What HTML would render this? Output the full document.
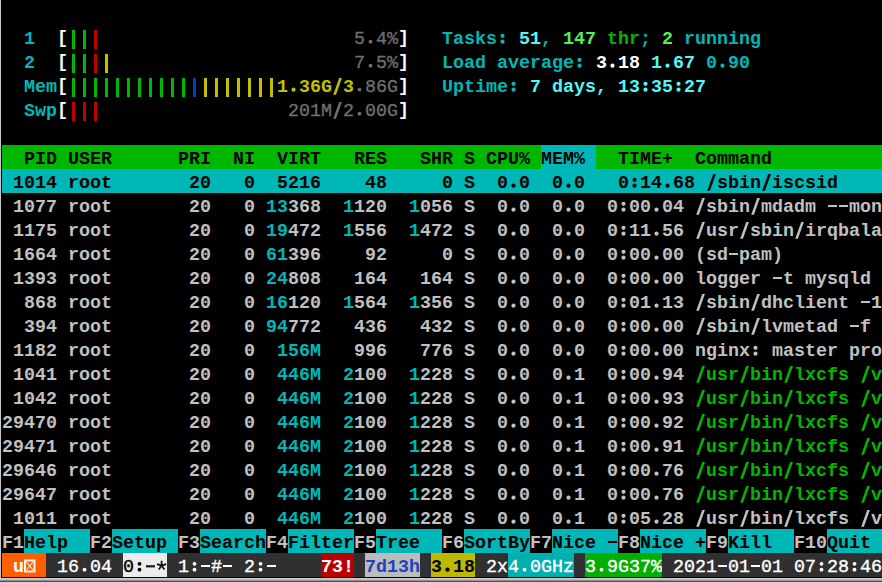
<!DOCTYPE html><html><head><meta charset="utf-8"><style>
html,body{margin:0;padding:0;background:#000;}
body{width:882px;height:582px;position:relative;overflow:hidden;font-family:"Liberation Mono",monospace;}
#L{position:absolute;left:0;top:0;width:1px;height:582px;background:#c8c8c8;}
#B1{position:absolute;left:0;top:578px;width:882px;height:4px;background:linear-gradient(#d0d0d0 0,#c4c4c4 25%,#c0c0c0 25%,#c0c0c0 50%,#909090 50%,#909090 75%,#505050 75%);}

.b{position:absolute;width:3px;height:19px;}
.h{position:absolute;width:9px;height:2px;}
.s{position:absolute;height:24px;line-height:30px;white-space:pre;font-size:18.33px;font-weight:700;}
</style></head><body>
<div id="L"></div><div id="B1"></div>
<div class="b" style="left:72px;top:30px;background:#00b700"></div>
<div class="b" style="left:83px;top:30px;background:#00b700"></div>
<div class="b" style="left:94px;top:30px;background:#c00000"></div>
<div class="b" style="left:72px;top:54px;background:#00b700"></div>
<div class="b" style="left:83px;top:54px;background:#00b700"></div>
<div class="b" style="left:94px;top:54px;background:#c00000"></div>
<div class="b" style="left:105px;top:54px;background:#c0c000"></div>
<div class="b" style="left:72px;top:78px;background:#00b700"></div>
<div class="b" style="left:83px;top:78px;background:#00b700"></div>
<div class="b" style="left:94px;top:78px;background:#00b700"></div>
<div class="b" style="left:105px;top:78px;background:#00b700"></div>
<div class="b" style="left:116px;top:78px;background:#00b700"></div>
<div class="b" style="left:127px;top:78px;background:#00b700"></div>
<div class="b" style="left:138px;top:78px;background:#00b700"></div>
<div class="b" style="left:149px;top:78px;background:#00b700"></div>
<div class="b" style="left:160px;top:78px;background:#00b700"></div>
<div class="b" style="left:171px;top:78px;background:#00b700"></div>
<div class="b" style="left:182px;top:78px;background:#00b700"></div>
<div class="b" style="left:193px;top:78px;background:#0040c0"></div>
<div class="b" style="left:204px;top:78px;background:#c0c000"></div>
<div class="b" style="left:215px;top:78px;background:#c0c000"></div>
<div class="b" style="left:226px;top:78px;background:#c0c000"></div>
<div class="b" style="left:237px;top:78px;background:#c0c000"></div>
<div class="b" style="left:248px;top:78px;background:#c0c000"></div>
<div class="b" style="left:259px;top:78px;background:#c0c000"></div>
<div class="b" style="left:270px;top:78px;background:#c0c000"></div>
<div class="b" style="left:72px;top:102px;background:#c00000"></div>
<div class="b" style="left:83px;top:102px;background:#c00000"></div>
<div class="b" style="left:94px;top:102px;background:#c00000"></div>
<div class="s" style="left:57px;top:24px;width:11px;color:#ffffff;font-weight:700">[</div>
<div class="s" style="left:398px;top:24px;width:11px;color:#ffffff;font-weight:700">]</div>
<div class="s" style="left:57px;top:48px;width:11px;color:#ffffff;font-weight:700">[</div>
<div class="s" style="left:398px;top:48px;width:11px;color:#ffffff;font-weight:700">]</div>
<div class="s" style="left:57px;top:72px;width:11px;color:#ffffff;font-weight:700">[</div>
<div class="s" style="left:398px;top:72px;width:11px;color:#ffffff;font-weight:700">]</div>
<div class="s" style="left:57px;top:96px;width:11px;color:#ffffff;font-weight:700">[</div>
<div class="s" style="left:398px;top:96px;width:11px;color:#ffffff;font-weight:700">]</div>
<div class="s" style="left:24px;top:25px;width:11px;color:#00b7b7;">1</div>
<div class="s" style="left:354px;top:25px;width:44px;color:#6e6e6e;font-weight:401;-webkit-text-stroke:0.35px currentColor;">5 4%</div>
<div class="s" style="left:442px;top:25px;width:77px;color:#00b7b7;">Tasks  </div>
<div class="s" style="left:519px;top:25px;width:22px;color:#55f5f5;">51</div>
<div class="s" style="left:541px;top:25px;width:22px;color:#00b7b7;">, </div>
<div class="s" style="left:563px;top:25px;width:33px;color:#55f055;">147</div>
<div class="s" style="left:596px;top:25px;width:44px;color:#00b700;"> thr</div>
<div class="s" style="left:640px;top:25px;width:22px;color:#00b7b7;">; </div>
<div class="s" style="left:662px;top:25px;width:11px;color:#55f055;">2</div>
<div class="s" style="left:673px;top:25px;width:88px;color:#00b7b7;"> running</div>
<div class="s" style="left:24px;top:49px;width:11px;color:#00b7b7;">2</div>
<div class="s" style="left:354px;top:49px;width:44px;color:#6e6e6e;font-weight:401;-webkit-text-stroke:0.35px currentColor;">7 5%</div>
<div class="s" style="left:442px;top:49px;width:154px;color:#00b7b7;">Load average  </div>
<div class="s" style="left:596px;top:49px;width:55px;color:#ffffff;">3 18 </div>
<div class="s" style="left:651px;top:49px;width:55px;color:#55f5f5;">1 67 </div>
<div class="s" style="left:706px;top:49px;width:44px;color:#00b7b7;">0 90</div>
<div class="s" style="left:24px;top:73px;width:33px;color:#00b7b7;">Mem</div>
<div class="s" style="left:277px;top:73px;width:77px;color:#c0c000;">1 36G 3</div>
<div class="s" style="left:354px;top:73px;width:44px;color:#6e6e6e;font-weight:401;-webkit-text-stroke:0.35px currentColor;"> 86G</div>
<div class="s" style="left:442px;top:73px;width:88px;color:#00b7b7;">Uptime  </div>
<div class="s" style="left:530px;top:73px;width:176px;color:#55f5f5;">7 days, 13 35 27</div>
<div class="s" style="left:24px;top:97px;width:33px;color:#00b7b7;">Swp</div>
<div class="s" style="left:288px;top:97px;width:110px;color:#6e6e6e;font-weight:401;-webkit-text-stroke:0.35px currentColor;">201M 2 00G</div>
<div class="s" style="left:2px;top:145px;width:539px;color:#000000;background:#00b700;">  PID USER      PRI  NI  VIRT   RES   SHR S CPU% </div>
<div class="s" style="left:541px;top:145px;width:55px;color:#000000;background:#00b7b7;">MEM% </div>
<div class="s" style="left:596px;top:145px;width:286px;color:#000000;background:#00b700;">  TIME+  Command          </div>
<div class="s" style="left:2px;top:169px;width:880px;color:#000000;background:#00b7b7;"> 1014 root       20   0  5216    48     0 S  0 0  0 0   0 14 68  sbin iscsid    </div>
<div class="s" style="left:2px;top:193px;width:55px;color:#c0c0c0;"> 1077</div>
<div class="s" style="left:68px;top:193px;width:44px;color:#c0c0c0;">root</div>
<div class="s" style="left:178px;top:193px;width:77px;color:#c0c0c0;"> 20   0</div>
<div class="s" style="left:266px;top:193px;width:22px;color:#00b7b7;">13</div>
<div class="s" style="left:288px;top:193px;width:33px;color:#c0c0c0;">368</div>
<div class="s" style="left:343px;top:193px;width:11px;color:#00b7b7;">1</div>
<div class="s" style="left:354px;top:193px;width:33px;color:#c0c0c0;">120</div>
<div class="s" style="left:409px;top:193px;width:11px;color:#00b7b7;">1</div>
<div class="s" style="left:420px;top:193px;width:33px;color:#c0c0c0;">056</div>
<div class="s" style="left:464px;top:193px;width:121px;color:#c0c0c0;">S  0 0  0 0</div>
<div class="s" style="left:585px;top:193px;width:99px;color:#c0c0c0;">  0 00 04</div>
<div class="h" style="left:828px;top:205px;background:#c0c0c0;z-index:2"></div>
<div class="h" style="left:839px;top:205px;background:#c0c0c0;z-index:2"></div>
<div class="s" style="left:695px;top:193px;width:187px;color:#c0c0c0;"> sbin mdadm   mon</div>
<div class="s" style="left:2px;top:217px;width:55px;color:#c0c0c0;"> 1175</div>
<div class="s" style="left:68px;top:217px;width:44px;color:#c0c0c0;">root</div>
<div class="s" style="left:178px;top:217px;width:77px;color:#c0c0c0;"> 20   0</div>
<div class="s" style="left:266px;top:217px;width:22px;color:#00b7b7;">19</div>
<div class="s" style="left:288px;top:217px;width:33px;color:#c0c0c0;">472</div>
<div class="s" style="left:343px;top:217px;width:11px;color:#00b7b7;">1</div>
<div class="s" style="left:354px;top:217px;width:33px;color:#c0c0c0;">556</div>
<div class="s" style="left:409px;top:217px;width:11px;color:#00b7b7;">1</div>
<div class="s" style="left:420px;top:217px;width:33px;color:#c0c0c0;">472</div>
<div class="s" style="left:464px;top:217px;width:121px;color:#c0c0c0;">S  0 0  0 0</div>
<div class="s" style="left:585px;top:217px;width:99px;color:#c0c0c0;">  0 11 56</div>
<div class="s" style="left:695px;top:217px;width:187px;color:#c0c0c0;"> usr sbin irqbala</div>
<div class="s" style="left:2px;top:241px;width:55px;color:#c0c0c0;"> 1664</div>
<div class="s" style="left:68px;top:241px;width:44px;color:#c0c0c0;">root</div>
<div class="s" style="left:178px;top:241px;width:77px;color:#c0c0c0;"> 20   0</div>
<div class="s" style="left:266px;top:241px;width:22px;color:#00b7b7;">61</div>
<div class="s" style="left:288px;top:241px;width:33px;color:#c0c0c0;">396</div>
<div class="s" style="left:332px;top:241px;width:55px;color:#c0c0c0;">   92</div>
<div class="s" style="left:398px;top:241px;width:55px;color:#c0c0c0;">    0</div>
<div class="s" style="left:464px;top:241px;width:121px;color:#c0c0c0;">S  0 0  0 0</div>
<div class="s" style="left:585px;top:241px;width:99px;color:#c0c0c0;">  0 00 00</div>
<div class="h" style="left:729px;top:253px;background:#c0c0c0;z-index:2"></div>
<div class="s" style="left:695px;top:241px;width:88px;color:#c0c0c0;">(sd pam)</div>
<div class="s" style="left:2px;top:265px;width:55px;color:#c0c0c0;"> 1393</div>
<div class="s" style="left:68px;top:265px;width:44px;color:#c0c0c0;">root</div>
<div class="s" style="left:178px;top:265px;width:77px;color:#c0c0c0;"> 20   0</div>
<div class="s" style="left:266px;top:265px;width:22px;color:#00b7b7;">24</div>
<div class="s" style="left:288px;top:265px;width:33px;color:#c0c0c0;">808</div>
<div class="s" style="left:332px;top:265px;width:55px;color:#c0c0c0;">  164</div>
<div class="s" style="left:398px;top:265px;width:55px;color:#c0c0c0;">  164</div>
<div class="s" style="left:464px;top:265px;width:121px;color:#c0c0c0;">S  0 0  0 0</div>
<div class="s" style="left:585px;top:265px;width:99px;color:#c0c0c0;">  0 00 00</div>
<div class="h" style="left:773px;top:277px;background:#c0c0c0;z-index:2"></div>
<div class="s" style="left:695px;top:265px;width:176px;color:#c0c0c0;">logger  t mysqld</div>
<div class="s" style="left:2px;top:289px;width:55px;color:#c0c0c0;">  868</div>
<div class="s" style="left:68px;top:289px;width:44px;color:#c0c0c0;">root</div>
<div class="s" style="left:178px;top:289px;width:77px;color:#c0c0c0;"> 20   0</div>
<div class="s" style="left:266px;top:289px;width:22px;color:#00b7b7;">16</div>
<div class="s" style="left:288px;top:289px;width:33px;color:#c0c0c0;">120</div>
<div class="s" style="left:343px;top:289px;width:11px;color:#00b7b7;">1</div>
<div class="s" style="left:354px;top:289px;width:33px;color:#c0c0c0;">564</div>
<div class="s" style="left:409px;top:289px;width:11px;color:#00b7b7;">1</div>
<div class="s" style="left:420px;top:289px;width:33px;color:#c0c0c0;">356</div>
<div class="s" style="left:464px;top:289px;width:121px;color:#c0c0c0;">S  0 0  0 0</div>
<div class="s" style="left:585px;top:289px;width:99px;color:#c0c0c0;">  0 01 13</div>
<div class="h" style="left:861px;top:301px;background:#c0c0c0;z-index:2"></div>
<div class="s" style="left:695px;top:289px;width:187px;color:#c0c0c0;"> sbin dhclient  1</div>
<div class="s" style="left:2px;top:313px;width:55px;color:#c0c0c0;">  394</div>
<div class="s" style="left:68px;top:313px;width:44px;color:#c0c0c0;">root</div>
<div class="s" style="left:178px;top:313px;width:77px;color:#c0c0c0;"> 20   0</div>
<div class="s" style="left:266px;top:313px;width:22px;color:#00b7b7;">94</div>
<div class="s" style="left:288px;top:313px;width:33px;color:#c0c0c0;">772</div>
<div class="s" style="left:332px;top:313px;width:55px;color:#c0c0c0;">  436</div>
<div class="s" style="left:398px;top:313px;width:55px;color:#c0c0c0;">  432</div>
<div class="s" style="left:464px;top:313px;width:121px;color:#c0c0c0;">S  0 0  0 0</div>
<div class="s" style="left:585px;top:313px;width:99px;color:#c0c0c0;">  0 00 00</div>
<div class="h" style="left:850px;top:325px;background:#c0c0c0;z-index:2"></div>
<div class="s" style="left:695px;top:313px;width:176px;color:#c0c0c0;"> sbin lvmetad  f</div>
<div class="s" style="left:2px;top:337px;width:55px;color:#c0c0c0;"> 1182</div>
<div class="s" style="left:68px;top:337px;width:44px;color:#c0c0c0;">root</div>
<div class="s" style="left:178px;top:337px;width:77px;color:#c0c0c0;"> 20   0</div>
<div class="s" style="left:266px;top:337px;width:55px;color:#00b7b7;"> 156M</div>
<div class="s" style="left:332px;top:337px;width:55px;color:#c0c0c0;">  996</div>
<div class="s" style="left:398px;top:337px;width:55px;color:#c0c0c0;">  776</div>
<div class="s" style="left:464px;top:337px;width:121px;color:#c0c0c0;">S  0 0  0 0</div>
<div class="s" style="left:585px;top:337px;width:99px;color:#c0c0c0;">  0 00 00</div>
<div class="s" style="left:695px;top:337px;width:187px;color:#c0c0c0;">nginx  master pro</div>
<div class="s" style="left:2px;top:361px;width:55px;color:#c0c0c0;"> 1041</div>
<div class="s" style="left:68px;top:361px;width:44px;color:#c0c0c0;">root</div>
<div class="s" style="left:178px;top:361px;width:77px;color:#c0c0c0;"> 20   0</div>
<div class="s" style="left:266px;top:361px;width:55px;color:#00b7b7;"> 446M</div>
<div class="s" style="left:343px;top:361px;width:11px;color:#00b7b7;">2</div>
<div class="s" style="left:354px;top:361px;width:33px;color:#c0c0c0;">100</div>
<div class="s" style="left:409px;top:361px;width:11px;color:#00b7b7;">1</div>
<div class="s" style="left:420px;top:361px;width:33px;color:#c0c0c0;">228</div>
<div class="s" style="left:464px;top:361px;width:121px;color:#c0c0c0;">S  0 0  0 1</div>
<div class="s" style="left:585px;top:361px;width:99px;color:#c0c0c0;">  0 00 94</div>
<div class="s" style="left:695px;top:361px;width:187px;color:#00b700;"> usr bin lxcfs  v</div>
<div class="s" style="left:2px;top:385px;width:55px;color:#c0c0c0;"> 1042</div>
<div class="s" style="left:68px;top:385px;width:44px;color:#c0c0c0;">root</div>
<div class="s" style="left:178px;top:385px;width:77px;color:#c0c0c0;"> 20   0</div>
<div class="s" style="left:266px;top:385px;width:55px;color:#00b7b7;"> 446M</div>
<div class="s" style="left:343px;top:385px;width:11px;color:#00b7b7;">2</div>
<div class="s" style="left:354px;top:385px;width:33px;color:#c0c0c0;">100</div>
<div class="s" style="left:409px;top:385px;width:11px;color:#00b7b7;">1</div>
<div class="s" style="left:420px;top:385px;width:33px;color:#c0c0c0;">228</div>
<div class="s" style="left:464px;top:385px;width:121px;color:#c0c0c0;">S  0 0  0 1</div>
<div class="s" style="left:585px;top:385px;width:99px;color:#c0c0c0;">  0 00 93</div>
<div class="s" style="left:695px;top:385px;width:187px;color:#00b700;"> usr bin lxcfs  v</div>
<div class="s" style="left:2px;top:409px;width:55px;color:#c0c0c0;">29470</div>
<div class="s" style="left:68px;top:409px;width:44px;color:#c0c0c0;">root</div>
<div class="s" style="left:178px;top:409px;width:77px;color:#c0c0c0;"> 20   0</div>
<div class="s" style="left:266px;top:409px;width:55px;color:#00b7b7;"> 446M</div>
<div class="s" style="left:343px;top:409px;width:11px;color:#00b7b7;">2</div>
<div class="s" style="left:354px;top:409px;width:33px;color:#c0c0c0;">100</div>
<div class="s" style="left:409px;top:409px;width:11px;color:#00b7b7;">1</div>
<div class="s" style="left:420px;top:409px;width:33px;color:#c0c0c0;">228</div>
<div class="s" style="left:464px;top:409px;width:121px;color:#c0c0c0;">S  0 0  0 1</div>
<div class="s" style="left:585px;top:409px;width:99px;color:#c0c0c0;">  0 00 92</div>
<div class="s" style="left:695px;top:409px;width:187px;color:#00b700;"> usr bin lxcfs  v</div>
<div class="s" style="left:2px;top:433px;width:55px;color:#c0c0c0;">29471</div>
<div class="s" style="left:68px;top:433px;width:44px;color:#c0c0c0;">root</div>
<div class="s" style="left:178px;top:433px;width:77px;color:#c0c0c0;"> 20   0</div>
<div class="s" style="left:266px;top:433px;width:55px;color:#00b7b7;"> 446M</div>
<div class="s" style="left:343px;top:433px;width:11px;color:#00b7b7;">2</div>
<div class="s" style="left:354px;top:433px;width:33px;color:#c0c0c0;">100</div>
<div class="s" style="left:409px;top:433px;width:11px;color:#00b7b7;">1</div>
<div class="s" style="left:420px;top:433px;width:33px;color:#c0c0c0;">228</div>
<div class="s" style="left:464px;top:433px;width:121px;color:#c0c0c0;">S  0 0  0 1</div>
<div class="s" style="left:585px;top:433px;width:99px;color:#c0c0c0;">  0 00 91</div>
<div class="s" style="left:695px;top:433px;width:187px;color:#00b700;"> usr bin lxcfs  v</div>
<div class="s" style="left:2px;top:457px;width:55px;color:#c0c0c0;">29646</div>
<div class="s" style="left:68px;top:457px;width:44px;color:#c0c0c0;">root</div>
<div class="s" style="left:178px;top:457px;width:77px;color:#c0c0c0;"> 20   0</div>
<div class="s" style="left:266px;top:457px;width:55px;color:#00b7b7;"> 446M</div>
<div class="s" style="left:343px;top:457px;width:11px;color:#00b7b7;">2</div>
<div class="s" style="left:354px;top:457px;width:33px;color:#c0c0c0;">100</div>
<div class="s" style="left:409px;top:457px;width:11px;color:#00b7b7;">1</div>
<div class="s" style="left:420px;top:457px;width:33px;color:#c0c0c0;">228</div>
<div class="s" style="left:464px;top:457px;width:121px;color:#c0c0c0;">S  0 0  0 1</div>
<div class="s" style="left:585px;top:457px;width:99px;color:#c0c0c0;">  0 00 76</div>
<div class="s" style="left:695px;top:457px;width:187px;color:#00b700;"> usr bin lxcfs  v</div>
<div class="s" style="left:2px;top:481px;width:55px;color:#c0c0c0;">29647</div>
<div class="s" style="left:68px;top:481px;width:44px;color:#c0c0c0;">root</div>
<div class="s" style="left:178px;top:481px;width:77px;color:#c0c0c0;"> 20   0</div>
<div class="s" style="left:266px;top:481px;width:55px;color:#00b7b7;"> 446M</div>
<div class="s" style="left:343px;top:481px;width:11px;color:#00b7b7;">2</div>
<div class="s" style="left:354px;top:481px;width:33px;color:#c0c0c0;">100</div>
<div class="s" style="left:409px;top:481px;width:11px;color:#00b7b7;">1</div>
<div class="s" style="left:420px;top:481px;width:33px;color:#c0c0c0;">228</div>
<div class="s" style="left:464px;top:481px;width:121px;color:#c0c0c0;">S  0 0  0 1</div>
<div class="s" style="left:585px;top:481px;width:99px;color:#c0c0c0;">  0 00 76</div>
<div class="s" style="left:695px;top:481px;width:187px;color:#00b700;"> usr bin lxcfs  v</div>
<div class="s" style="left:2px;top:505px;width:55px;color:#c0c0c0;"> 1011</div>
<div class="s" style="left:68px;top:505px;width:44px;color:#c0c0c0;">root</div>
<div class="s" style="left:178px;top:505px;width:77px;color:#c0c0c0;"> 20   0</div>
<div class="s" style="left:266px;top:505px;width:55px;color:#00b7b7;"> 446M</div>
<div class="s" style="left:343px;top:505px;width:11px;color:#00b7b7;">2</div>
<div class="s" style="left:354px;top:505px;width:33px;color:#c0c0c0;">100</div>
<div class="s" style="left:409px;top:505px;width:11px;color:#00b7b7;">1</div>
<div class="s" style="left:420px;top:505px;width:33px;color:#c0c0c0;">228</div>
<div class="s" style="left:464px;top:505px;width:121px;color:#c0c0c0;">S  0 0  0 1</div>
<div class="s" style="left:585px;top:505px;width:99px;color:#c0c0c0;">  0 05 28</div>
<div class="s" style="left:695px;top:505px;width:187px;color:#c0c0c0;"> usr bin lxcfs  v</div>
<div class="s" style="left:2px;top:529px;width:22px;color:#c0c0c0;background:#000000;">F1</div>
<div class="s" style="left:24px;top:529px;width:66px;color:#000000;background:#00b7b7;">Help  </div>
<div class="s" style="left:90px;top:529px;width:22px;color:#c0c0c0;background:#000000;">F2</div>
<div class="s" style="left:112px;top:529px;width:66px;color:#000000;background:#00b7b7;">Setup </div>
<div class="s" style="left:178px;top:529px;width:22px;color:#c0c0c0;background:#000000;">F3</div>
<div class="s" style="left:200px;top:529px;width:66px;color:#000000;background:#00b7b7;">Search</div>
<div class="s" style="left:266px;top:529px;width:22px;color:#c0c0c0;background:#000000;">F4</div>
<div class="s" style="left:288px;top:529px;width:66px;color:#000000;background:#00b7b7;">Filter</div>
<div class="s" style="left:354px;top:529px;width:22px;color:#c0c0c0;background:#000000;">F5</div>
<div class="s" style="left:376px;top:529px;width:66px;color:#000000;background:#00b7b7;">Tree  </div>
<div class="s" style="left:442px;top:529px;width:22px;color:#c0c0c0;background:#000000;">F6</div>
<div class="s" style="left:464px;top:529px;width:66px;color:#000000;background:#00b7b7;">SortBy</div>
<div class="s" style="left:530px;top:529px;width:22px;color:#c0c0c0;background:#000000;">F7</div>
<div class="h" style="left:608px;top:541px;background:#000000;z-index:2"></div>
<div class="s" style="left:552px;top:529px;width:66px;color:#000000;background:#00b7b7;">Nice  </div>
<div class="s" style="left:618px;top:529px;width:22px;color:#c0c0c0;background:#000000;">F8</div>
<div class="s" style="left:640px;top:529px;width:66px;color:#000000;background:#00b7b7;">Nice +</div>
<div class="s" style="left:706px;top:529px;width:22px;color:#c0c0c0;background:#000000;">F9</div>
<div class="s" style="left:728px;top:529px;width:66px;color:#000000;background:#00b7b7;">Kill  </div>
<div class="s" style="left:794px;top:529px;width:33px;color:#c0c0c0;background:#000000;">F10</div>
<div class="s" style="left:827px;top:529px;width:55px;color:#000000;background:#00b7b7;">Quit </div>
<div class="s" style="left:2px;top:553px;width:44px;color:#ffffff;background:#303030;font-weight:400;-webkit-text-stroke:0.35px currentColor;">    </div>
<div class="s" style="left:2px;top:553px;width:44px;color:#ffffff;background:#ff5f00;"> u  </div>
<div class="s" style="left:46px;top:553px;width:77px;color:#ffffff;background:#303030;font-weight:400;-webkit-text-stroke:0.35px currentColor;"> 16 04 </div>
<div class="s" style="left:123px;top:553px;width:44px;color:#000000;background:#ebebeb;font-weight:400;-webkit-text-stroke:0.35px currentColor;">0   </div>
<div class="h" style="left:201px;top:565px;background:#ffffff;z-index:2"></div>
<div class="h" style="left:223px;top:565px;background:#ffffff;z-index:2"></div>
<div class="h" style="left:267px;top:565px;background:#ffffff;z-index:2"></div>
<div class="s" style="left:167px;top:553px;width:176px;color:#ffffff;background:#303030;font-weight:400;-webkit-text-stroke:0.35px currentColor;"> 1  #  2        </div>
<div class="s" style="left:321px;top:553px;width:33px;color:#ffffff;background:#bb0000;">73!</div>
<div class="s" style="left:354px;top:553px;width:11px;color:#ffffff;background:#303030;font-weight:400;-webkit-text-stroke:0.35px currentColor;"> </div>
<div class="s" style="left:365px;top:553px;width:55px;color:#1a44c4;background:#bcbcbc;">7d13h</div>
<div class="s" style="left:420px;top:553px;width:11px;color:#ffffff;background:#303030;font-weight:400;-webkit-text-stroke:0.35px currentColor;"> </div>
<div class="s" style="left:431px;top:553px;width:44px;color:#000000;background:#bdb800;">3 18</div>
<div class="s" style="left:475px;top:553px;width:33px;color:#ffffff;background:#303030;font-weight:400;-webkit-text-stroke:0.35px currentColor;"> 2x</div>
<div class="s" style="left:508px;top:553px;width:66px;color:#ffffff;background:#00afaf;font-weight:400;-webkit-text-stroke:0.35px currentColor;">4 0GHz</div>
<div class="s" style="left:574px;top:553px;width:11px;color:#ffffff;background:#303030;font-weight:400;-webkit-text-stroke:0.35px currentColor;"> </div>
<div class="s" style="left:585px;top:553px;width:77px;color:#ffffff;background:#00af00;font-weight:400;-webkit-text-stroke:0.35px currentColor;">3 9G37%</div>
<div class="h" style="left:718px;top:565px;background:#ffffff;z-index:2"></div>
<div class="h" style="left:751px;top:565px;background:#ffffff;z-index:2"></div>
<div class="s" style="left:662px;top:553px;width:220px;color:#ffffff;background:#303030;font-weight:400;-webkit-text-stroke:0.35px currentColor;"> 2021 01 01 07 28 46</div>
<svg style="position:absolute;left:0;top:0" width="882" height="582" viewBox="0 0 882 582">
<rect x="25" y="560.5" width="9.5" height="11" fill="none" stroke="#f2f2f2" stroke-width="2"/>
<path d="M26.5 562 L33 570 M33 562 L26.5 570" stroke="#f2f2f2" stroke-width="1.1" fill="none"/>
<rect x="146" y="565.2" width="9" height="2.2" fill="#1a1a1a"/>
<g stroke="#111" stroke-width="1.7" stroke-linecap="butt" fill="none" transform="translate(161.6,565.6)">
<path d="M0 0 L0 -4.8 M0 0 L4.6 -1.5 M0 0 L2.8 3.9 M0 0 L-2.8 3.9 M0 0 L-4.6 -1.5"/>
</g>
</svg>
<svg style="position:absolute;left:0;top:0;z-index:3" width="882" height="582"><g stroke-width="2.6" fill="none"><circle cx="370.5" cy="41.7" r="1.9" fill="#6e6e6e"/><circle cx="502.5" cy="35.8" r="2.1" fill="#00b7b7"/><circle cx="502.5" cy="41.7" r="2.1" fill="#00b7b7"/><circle cx="370.5" cy="65.7" r="1.9" fill="#6e6e6e"/><circle cx="579.5" cy="59.8" r="2.1" fill="#00b7b7"/><circle cx="579.5" cy="65.7" r="2.1" fill="#00b7b7"/><circle cx="612.5" cy="65.7" r="2.1" fill="#ffffff"/><circle cx="667.5" cy="65.7" r="2.1" fill="#55f5f5"/><circle cx="722.5" cy="65.7" r="2.1" fill="#00b7b7"/><path d="M333.2 94.8 L335.9 94.8 L341.9 78 L339.2 78Z" fill="#c0c000"/><circle cx="293.5" cy="89.7" r="2.1" fill="#c0c000"/><circle cx="359.5" cy="89.7" r="1.9" fill="#6e6e6e"/><circle cx="513.5" cy="83.8" r="2.1" fill="#00b7b7"/><circle cx="513.5" cy="89.7" r="2.1" fill="#00b7b7"/><circle cx="645.5" cy="83.8" r="2.1" fill="#55f5f5"/><circle cx="645.5" cy="89.7" r="2.1" fill="#55f5f5"/><circle cx="678.5" cy="83.8" r="2.1" fill="#55f5f5"/><circle cx="678.5" cy="89.7" r="2.1" fill="#55f5f5"/><path d="M333.2 118.8 L335.9 118.8 L341.9 102 L339.2 102Z" fill="#6e6e6e"/><circle cx="359.5" cy="113.7" r="1.9" fill="#6e6e6e"/><path d="M707.2 190.8 L709.9 190.8 L715.9 174 L713.2 174Z" fill="#000000"/><path d="M762.2 190.8 L764.9 190.8 L770.9 174 L768.2 174Z" fill="#000000"/><circle cx="513.5" cy="185.7" r="2.1" fill="#000000"/><circle cx="568.5" cy="185.7" r="2.1" fill="#000000"/><circle cx="667.5" cy="185.7" r="2.1" fill="#000000"/><circle cx="634.5" cy="179.8" r="2.1" fill="#000000"/><circle cx="634.5" cy="185.7" r="2.1" fill="#000000"/><circle cx="513.5" cy="209.7" r="2.1" fill="#c0c0c0"/><circle cx="568.5" cy="209.7" r="2.1" fill="#c0c0c0"/><circle cx="656.5" cy="209.7" r="2.1" fill="#c0c0c0"/><circle cx="623.5" cy="203.8" r="2.1" fill="#c0c0c0"/><circle cx="623.5" cy="209.7" r="2.1" fill="#c0c0c0"/><path d="M696.2 214.8 L698.9 214.8 L704.9 198 L702.2 198Z" fill="#c0c0c0"/><path d="M751.2 214.8 L753.9 214.8 L759.9 198 L757.2 198Z" fill="#c0c0c0"/><circle cx="513.5" cy="233.7" r="2.1" fill="#c0c0c0"/><circle cx="568.5" cy="233.7" r="2.1" fill="#c0c0c0"/><circle cx="656.5" cy="233.7" r="2.1" fill="#c0c0c0"/><circle cx="623.5" cy="227.8" r="2.1" fill="#c0c0c0"/><circle cx="623.5" cy="233.7" r="2.1" fill="#c0c0c0"/><path d="M696.2 238.8 L698.9 238.8 L704.9 222 L702.2 222Z" fill="#c0c0c0"/><path d="M740.2 238.8 L742.9 238.8 L748.9 222 L746.2 222Z" fill="#c0c0c0"/><path d="M795.2 238.8 L797.9 238.8 L803.9 222 L801.2 222Z" fill="#c0c0c0"/><circle cx="513.5" cy="257.7" r="2.1" fill="#c0c0c0"/><circle cx="568.5" cy="257.7" r="2.1" fill="#c0c0c0"/><circle cx="656.5" cy="257.7" r="2.1" fill="#c0c0c0"/><circle cx="623.5" cy="251.8" r="2.1" fill="#c0c0c0"/><circle cx="623.5" cy="257.7" r="2.1" fill="#c0c0c0"/><circle cx="513.5" cy="281.7" r="2.1" fill="#c0c0c0"/><circle cx="568.5" cy="281.7" r="2.1" fill="#c0c0c0"/><circle cx="656.5" cy="281.7" r="2.1" fill="#c0c0c0"/><circle cx="623.5" cy="275.8" r="2.1" fill="#c0c0c0"/><circle cx="623.5" cy="281.7" r="2.1" fill="#c0c0c0"/><circle cx="513.5" cy="305.7" r="2.1" fill="#c0c0c0"/><circle cx="568.5" cy="305.7" r="2.1" fill="#c0c0c0"/><circle cx="656.5" cy="305.7" r="2.1" fill="#c0c0c0"/><circle cx="623.5" cy="299.8" r="2.1" fill="#c0c0c0"/><circle cx="623.5" cy="305.7" r="2.1" fill="#c0c0c0"/><path d="M696.2 310.8 L698.9 310.8 L704.9 294 L702.2 294Z" fill="#c0c0c0"/><path d="M751.2 310.8 L753.9 310.8 L759.9 294 L757.2 294Z" fill="#c0c0c0"/><circle cx="513.5" cy="329.7" r="2.1" fill="#c0c0c0"/><circle cx="568.5" cy="329.7" r="2.1" fill="#c0c0c0"/><circle cx="656.5" cy="329.7" r="2.1" fill="#c0c0c0"/><circle cx="623.5" cy="323.8" r="2.1" fill="#c0c0c0"/><circle cx="623.5" cy="329.7" r="2.1" fill="#c0c0c0"/><path d="M696.2 334.8 L698.9 334.8 L704.9 318 L702.2 318Z" fill="#c0c0c0"/><path d="M751.2 334.8 L753.9 334.8 L759.9 318 L757.2 318Z" fill="#c0c0c0"/><circle cx="513.5" cy="353.7" r="2.1" fill="#c0c0c0"/><circle cx="568.5" cy="353.7" r="2.1" fill="#c0c0c0"/><circle cx="656.5" cy="353.7" r="2.1" fill="#c0c0c0"/><circle cx="623.5" cy="347.8" r="2.1" fill="#c0c0c0"/><circle cx="623.5" cy="353.7" r="2.1" fill="#c0c0c0"/><circle cx="755.5" cy="347.8" r="2.1" fill="#c0c0c0"/><circle cx="755.5" cy="353.7" r="2.1" fill="#c0c0c0"/><circle cx="513.5" cy="377.7" r="2.1" fill="#c0c0c0"/><circle cx="568.5" cy="377.7" r="2.1" fill="#c0c0c0"/><circle cx="656.5" cy="377.7" r="2.1" fill="#c0c0c0"/><circle cx="623.5" cy="371.8" r="2.1" fill="#c0c0c0"/><circle cx="623.5" cy="377.7" r="2.1" fill="#c0c0c0"/><path d="M696.2 382.8 L698.9 382.8 L704.9 366 L702.2 366Z" fill="#00b700"/><path d="M740.2 382.8 L742.9 382.8 L748.9 366 L746.2 366Z" fill="#00b700"/><path d="M784.2 382.8 L786.9 382.8 L792.9 366 L790.2 366Z" fill="#00b700"/><path d="M861.2 382.8 L863.9 382.8 L869.9 366 L867.2 366Z" fill="#00b700"/><circle cx="513.5" cy="401.7" r="2.1" fill="#c0c0c0"/><circle cx="568.5" cy="401.7" r="2.1" fill="#c0c0c0"/><circle cx="656.5" cy="401.7" r="2.1" fill="#c0c0c0"/><circle cx="623.5" cy="395.8" r="2.1" fill="#c0c0c0"/><circle cx="623.5" cy="401.7" r="2.1" fill="#c0c0c0"/><path d="M696.2 406.8 L698.9 406.8 L704.9 390 L702.2 390Z" fill="#00b700"/><path d="M740.2 406.8 L742.9 406.8 L748.9 390 L746.2 390Z" fill="#00b700"/><path d="M784.2 406.8 L786.9 406.8 L792.9 390 L790.2 390Z" fill="#00b700"/><path d="M861.2 406.8 L863.9 406.8 L869.9 390 L867.2 390Z" fill="#00b700"/><circle cx="513.5" cy="425.7" r="2.1" fill="#c0c0c0"/><circle cx="568.5" cy="425.7" r="2.1" fill="#c0c0c0"/><circle cx="656.5" cy="425.7" r="2.1" fill="#c0c0c0"/><circle cx="623.5" cy="419.8" r="2.1" fill="#c0c0c0"/><circle cx="623.5" cy="425.7" r="2.1" fill="#c0c0c0"/><path d="M696.2 430.8 L698.9 430.8 L704.9 414 L702.2 414Z" fill="#00b700"/><path d="M740.2 430.8 L742.9 430.8 L748.9 414 L746.2 414Z" fill="#00b700"/><path d="M784.2 430.8 L786.9 430.8 L792.9 414 L790.2 414Z" fill="#00b700"/><path d="M861.2 430.8 L863.9 430.8 L869.9 414 L867.2 414Z" fill="#00b700"/><circle cx="513.5" cy="449.7" r="2.1" fill="#c0c0c0"/><circle cx="568.5" cy="449.7" r="2.1" fill="#c0c0c0"/><circle cx="656.5" cy="449.7" r="2.1" fill="#c0c0c0"/><circle cx="623.5" cy="443.8" r="2.1" fill="#c0c0c0"/><circle cx="623.5" cy="449.7" r="2.1" fill="#c0c0c0"/><path d="M696.2 454.8 L698.9 454.8 L704.9 438 L702.2 438Z" fill="#00b700"/><path d="M740.2 454.8 L742.9 454.8 L748.9 438 L746.2 438Z" fill="#00b700"/><path d="M784.2 454.8 L786.9 454.8 L792.9 438 L790.2 438Z" fill="#00b700"/><path d="M861.2 454.8 L863.9 454.8 L869.9 438 L867.2 438Z" fill="#00b700"/><circle cx="513.5" cy="473.7" r="2.1" fill="#c0c0c0"/><circle cx="568.5" cy="473.7" r="2.1" fill="#c0c0c0"/><circle cx="656.5" cy="473.7" r="2.1" fill="#c0c0c0"/><circle cx="623.5" cy="467.8" r="2.1" fill="#c0c0c0"/><circle cx="623.5" cy="473.7" r="2.1" fill="#c0c0c0"/><path d="M696.2 478.8 L698.9 478.8 L704.9 462 L702.2 462Z" fill="#00b700"/><path d="M740.2 478.8 L742.9 478.8 L748.9 462 L746.2 462Z" fill="#00b700"/><path d="M784.2 478.8 L786.9 478.8 L792.9 462 L790.2 462Z" fill="#00b700"/><path d="M861.2 478.8 L863.9 478.8 L869.9 462 L867.2 462Z" fill="#00b700"/><circle cx="513.5" cy="497.7" r="2.1" fill="#c0c0c0"/><circle cx="568.5" cy="497.7" r="2.1" fill="#c0c0c0"/><circle cx="656.5" cy="497.7" r="2.1" fill="#c0c0c0"/><circle cx="623.5" cy="491.8" r="2.1" fill="#c0c0c0"/><circle cx="623.5" cy="497.7" r="2.1" fill="#c0c0c0"/><path d="M696.2 502.8 L698.9 502.8 L704.9 486 L702.2 486Z" fill="#00b700"/><path d="M740.2 502.8 L742.9 502.8 L748.9 486 L746.2 486Z" fill="#00b700"/><path d="M784.2 502.8 L786.9 502.8 L792.9 486 L790.2 486Z" fill="#00b700"/><path d="M861.2 502.8 L863.9 502.8 L869.9 486 L867.2 486Z" fill="#00b700"/><circle cx="513.5" cy="521.7" r="2.1" fill="#c0c0c0"/><circle cx="568.5" cy="521.7" r="2.1" fill="#c0c0c0"/><circle cx="656.5" cy="521.7" r="2.1" fill="#c0c0c0"/><circle cx="623.5" cy="515.8" r="2.1" fill="#c0c0c0"/><circle cx="623.5" cy="521.7" r="2.1" fill="#c0c0c0"/><path d="M696.2 526.8 L698.9 526.8 L704.9 510 L702.2 510Z" fill="#c0c0c0"/><path d="M740.2 526.8 L742.9 526.8 L748.9 510 L746.2 510Z" fill="#c0c0c0"/><path d="M784.2 526.8 L786.9 526.8 L792.9 510 L790.2 510Z" fill="#c0c0c0"/><path d="M861.2 526.8 L863.9 526.8 L869.9 510 L867.2 510Z" fill="#c0c0c0"/><circle cx="84.5" cy="569.7" r="1.9" fill="#ffffff"/><circle cx="139.5" cy="563.8" r="1.9" fill="#000000"/><circle cx="139.5" cy="569.7" r="1.9" fill="#000000"/><circle cx="194.5" cy="563.8" r="1.9" fill="#ffffff"/><circle cx="194.5" cy="569.7" r="1.9" fill="#ffffff"/><circle cx="260.5" cy="563.8" r="1.9" fill="#ffffff"/><circle cx="260.5" cy="569.7" r="1.9" fill="#ffffff"/><circle cx="447.5" cy="569.7" r="2.1" fill="#000000"/><circle cx="524.5" cy="569.7" r="1.9" fill="#ffffff"/><circle cx="601.5" cy="569.7" r="1.9" fill="#ffffff"/><circle cx="821.5" cy="563.8" r="1.9" fill="#ffffff"/><circle cx="821.5" cy="569.7" r="1.9" fill="#ffffff"/><circle cx="854.5" cy="563.8" r="1.9" fill="#ffffff"/><circle cx="854.5" cy="569.7" r="1.9" fill="#ffffff"/></g></svg>
</body></html>
